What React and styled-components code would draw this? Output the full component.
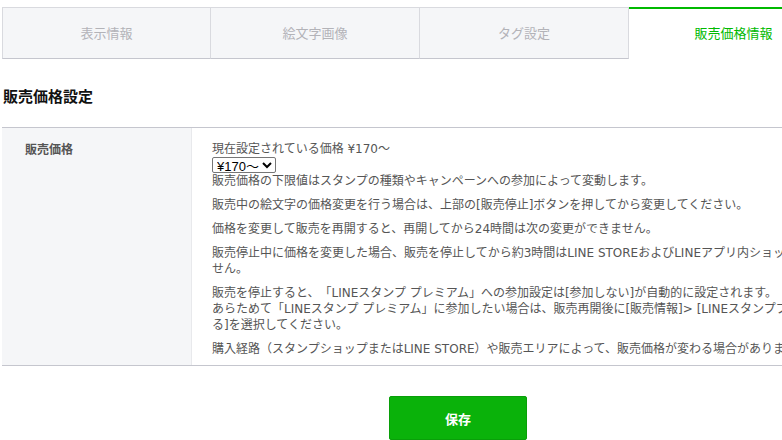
import React from "react";
import styled, { createGlobalStyle } from "styled-components";

const Global = createGlobalStyle`
  html, body { margin: 0; padding: 0; background: #fff; overflow: hidden; }
  body { font-family: "Noto Sans CJK JP", "Noto Sans", "Liberation Sans", sans-serif; }
`;

const Page = styled.div`
  width: 912px;
  padding: 7px 0 0 2px;
`;

const Tabs = styled.div`
  display: flex;
`;

const Tab = styled.div`
  flex: none;
  width: 209px;
  height: 52px;
  box-sizing: border-box;
  display: flex;
  align-items: center;
  justify-content: center;
  font-size: 13px;
  background: ${(p) => (p.$active ? "#fff" : "#f5f6f8")};
  color: ${(p) => (p.$active ? "#00b900" : "#b3b3b8")};
  border-top: ${(p) => (p.$active ? "2px solid #00b900" : "1px solid #d9dadf")};
  border-left: ${(p) => (p.$first ? "1px solid #d9dadf" : "none")};
  border-right: ${(p) => (p.$active ? "none" : "1px solid #d9dadf")};
  border-bottom: ${(p) => (p.$active ? "none" : "1px solid #c5c6ce")};
  padding-bottom: ${(p) => (p.$active ? "3px" : "1px")};
`;

const Heading = styled.h2`
  margin: 26px 0 0 1px;
  font-size: 15px;
  line-height: 22px;
  font-weight: bold;
  color: #111;
`;

const Table = styled.div`
  margin-top: 20px;
  display: grid;
  grid-template-columns: 190px 1fr;
  border-top: 1px solid #c5c6ce;
  border-bottom: 1px solid #c5c6ce;
`;

const LabelCell = styled.div`
  background: #f5f6f8;
  border-right: 1px solid #e8e9ec;
  padding: 13px 0 0 23px;
  font-size: 12px;
  line-height: 16px;
  font-weight: bold;
  color: #555;
`;

const ValueCell = styled.div`
  padding: 13px 20px 0 20px;
  font-family: "DejaVu Sans", "Noto Sans CJK JP", sans-serif;
  font-size: 12px;
  line-height: 16px;
  color: #555;
  text-spacing-trim: space-all;
`;

const Line = styled.div``;

const Select = styled.select`
  font-family: "Liberation Sans", "Noto Sans CJK JP", sans-serif;
  font-size: 13px;
  height: 16px;
  padding: 0;
  margin: 0;
  color: #000;
  border: 1px solid #767676;
  border-radius: 2px;
  background: #fff;
  display: block;
`;

const Para = styled.p`
  margin: 0 0 8px;
`;

const Footer = styled.div`
  display: flex;
  justify-content: center;
  padding-top: 30px;
`;

const SaveButton = styled.button`
  width: 138px;
  height: 44px;
  background: #0ab20a;
  border: 1px solid #099f09;
  border-radius: 2px;
  color: #fff;
  font-family: inherit;
  font-weight: bold;
  font-size: 13px;
`;

export default function App() {
  const tabs = ["表示情報", "絵文字画像", "タグ設定", "販売価格情報"];
  return (
    <>
      <Global />
      <Page>
        <Tabs>
          {tabs.map((t, i) => (
            <Tab key={t} $first={i === 0} $active={i === 3}>
              {t}
            </Tab>
          ))}
        </Tabs>
        <Heading>販売価格設定</Heading>
        <Table>
          <LabelCell>販売価格</LabelCell>
          <ValueCell>
            <Line>現在設定されている価格 ¥170～</Line>
            <Select defaultValue="170">
              <option value="170">¥170～</option>
            </Select>
            <Para>販売価格の下限値はスタンプの種類やキャンペーンへの参加によって変動します。</Para>
            <Para>販売中の絵文字の価格変更を行う場合は、上部の[販売停止]ボタンを押してから変更してください。</Para>
            <Para>価格を変更して販売を再開すると、再開してから24時間は次の変更ができません。</Para>
            <Para>販売停止中に価格を変更した場合、販売を停止してから約3時間はLINE STOREおよびLINEアプリ内ショップ上には反映されません。</Para>
            <Para>
              販売を停止すると、「LINEスタンプ プレミアム」への参加設定は[参加しない]が自動的に設定されます。
              <br />
              あらためて「LINEスタンプ プレミアム」に参加したい場合は、販売再開後に[販売情報]&gt; [LINEスタンププレミアム]&gt;[参加する]を選択してください。
            </Para>
            <Para>購入経路（スタンプショップまたはLINE STORE）や販売エリアによって、販売価格が変わる場合があります。</Para>
          </ValueCell>
        </Table>
        <Footer>
          <SaveButton>保存</SaveButton>
        </Footer>
      </Page>
    </>
  );
}
